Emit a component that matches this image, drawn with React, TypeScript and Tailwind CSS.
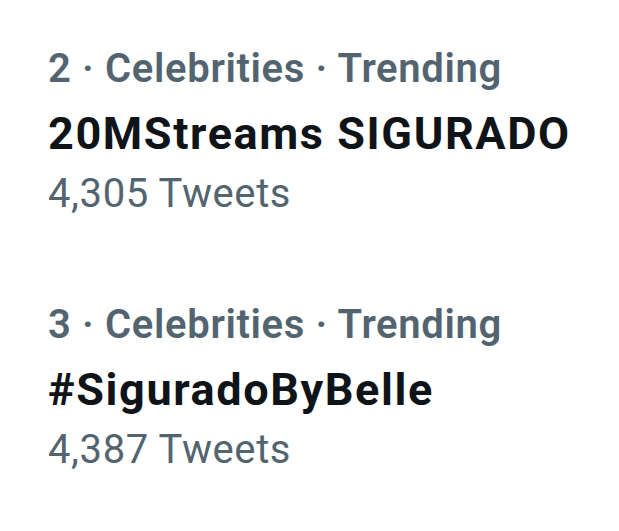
export default function App() {
  const items = [
    { rank: 2, title: "20MStreams SIGURADO", count: "4,305" },
    { rank: 3, title: "#SiguradoByBelle", count: "4,387" },
  ];
  return (
    <div className="w-[619px] h-[531px] bg-white overflow-hidden pl-[48px] pt-[45px]" style={{ fontFamily: "Roboto, 'Noto Sans', sans-serif" }}>
      {items.map((it, i) => (
        <div key={i} className={i > 0 ? "mt-[83px]" : ""}>
          <div className="text-[40px] leading-[48px] font-semibold tracking-[0.65px] text-[#536471] whitespace-nowrap">
            {it.rank} · Celebrities · Trending
          </div>
          <div className="mt-[13px] text-[45px] leading-[56px] font-bold tracking-[1.6px] text-[#0f1419] whitespace-nowrap">
            {it.title}
          </div>
          <div className="mt-[8px] text-[40px] leading-[48px] tracking-[0.6px] text-[#536471] whitespace-nowrap">
            {it.count} Tweets
          </div>
        </div>
      ))}
    </div>
  );
}
